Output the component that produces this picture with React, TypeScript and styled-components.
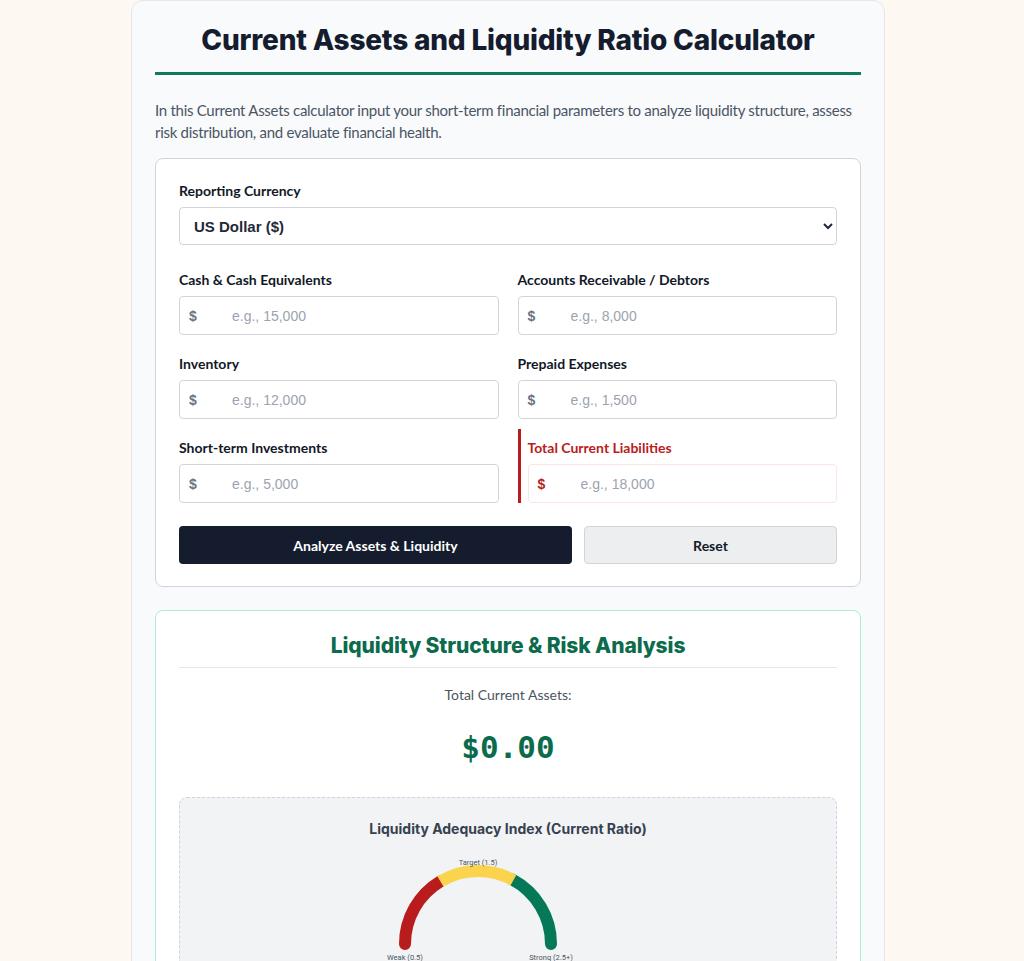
import styled, { createGlobalStyle } from 'styled-components';

const GlobalStyle = createGlobalStyle`
  * { box-sizing: border-box; }
  body {
    margin: 0;
    background: #fdf8f2;
    font-family: Lato, "Open Sans", sans-serif;
  }
`;

const fields = [
  { label: 'Cash & Cash Equivalents', placeholder: 'e.g., 15,000' },
  { label: 'Accounts Receivable / Debtors', placeholder: 'e.g., 8,000' },
  { label: 'Inventory', placeholder: 'e.g., 12,000' },
  { label: 'Prepaid Expenses', placeholder: 'e.g., 1,500' },
  { label: 'Short-term Investments', placeholder: 'e.g., 5,000' },
];

// semicircle arc on the gauge, angles in degrees (180 = left end)
const arc = (from: number, to: number) => {
  const cx = 100, cy = 88, r = 73;
  const p = (a: number) => {
    const rad = (a * Math.PI) / 180;
    return `${(cx + r * Math.cos(rad)).toFixed(2)} ${(cy - r * Math.sin(rad)).toFixed(2)}`;
  };
  return `M ${p(from)} A ${r} ${r} 0 0 1 ${p(to)}`;
};

const App = () => {
  return (
    <>
      <GlobalStyle />
      <Page>
        <Container>
          <Title>Current Assets and Liquidity Ratio Calculator</Title>
          <Intro>
            In this Current Assets calculator input your short-term financial parameters to analyze
            liquidity structure, assess risk distribution, and evaluate financial health.
          </Intro>

          <FormCard>
            <Field>
              <Label>Reporting Currency</Label>
              <Select defaultValue="USD">
                <option value="USD">US Dollar ($)</option>
                <option value="EUR">Euro (€)</option>
                <option value="GBP">British Pound (£)</option>
              </Select>
            </Field>

            <Grid>
              {fields.map((f) => (
                <Field key={f.label}>
                  <Label>{f.label}</Label>
                  <InputWrap>
                    <Prefix>$</Prefix>
                    <Input placeholder={f.placeholder} />
                  </InputWrap>
                </Field>
              ))}
              <LiabilityField>
                <Label $danger>Total Current Liabilities</Label>
                <InputWrap $danger>
                  <Prefix $danger>$</Prefix>
                  <Input placeholder="e.g., 18,000" />
                </InputWrap>
              </LiabilityField>
            </Grid>

            <Actions>
              <PrimaryButton>Analyze Assets &amp; Liquidity</PrimaryButton>
              <ResetButton>Reset</ResetButton>
            </Actions>
          </FormCard>

          <ResultCard>
            <ResultTitle>Liquidity Structure &amp; Risk Analysis</ResultTitle>
            <TotalLabel>Total Current Assets:</TotalLabel>
            <TotalValue>$0.00</TotalValue>

            <GaugeBox>
              <GaugeTitle>Liquidity Adequacy Index (Current Ratio)</GaugeTitle>
              <GaugeSvg width="200" height="110" viewBox="0 0 200 110">
                <path d={arc(180, 121)} stroke="#b91c1c" strokeWidth="12" fill="none" strokeLinecap="round" />
                <path d={arc(62, 0)} stroke="#047857" strokeWidth="12" fill="none" strokeLinecap="round" />
                <path d={arc(121, 61)} stroke="#fcd34d" strokeWidth="12" fill="none" />
                <text x="100" y="9" textAnchor="middle" fontSize="7.5" fill="#4b5563" fontFamily="Roboto, sans-serif">Target (1.5)</text>
                <text x="27" y="104" textAnchor="middle" fontSize="7.5" fill="#4b5563" fontFamily="Roboto, sans-serif">Weak (0.5)</text>
                <text x="173" y="104" textAnchor="middle" fontSize="7.5" fill="#4b5563" fontFamily="Roboto, sans-serif">Strong (2.5+)</text>
              </GaugeSvg>
            </GaugeBox>
          </ResultCard>
        </Container>
      </Page>
    </>
  );
};

export default App;

const Page = styled.div`
  display: flex;
  justify-content: center;
  padding-right: 8px;
`;

const Container = styled.div`
  width: 754px;
  background: #f8fafc;
  border: 1px solid #e5e7eb;
  border-radius: 12px;
  padding: 22px 23px 40px;
`;

const Title = styled.h1`
  margin: 0;
  padding-bottom: 15px;
  border-bottom: 3px solid #0f7a57;
  text-align: center;
  font-family: Inter, sans-serif;
  font-size: 28px;
  font-weight: 800;
  letter-spacing: -0.2px;
  color: #141c2e;
`;

const Intro = styled.p`
  margin: 24px 0 15px;
  font-size: 15px;
  line-height: 22px;
  letter-spacing: -0.28px;
  color: #4b5563;
`;

const FormCard = styled.div`
  background: #fff;
  border: 1px solid #d1d5db;
  border-radius: 8px;
  padding: 23px 23px 22px;
`;

const Field = styled.div`
  display: flex;
  flex-direction: column;
`;

const LiabilityField = styled(Field)`
  border-left: 3px solid #b91c1c;
  padding-left: 7px;
  margin-top: -10px;
  padding-top: 10px;
`;

const Label = styled.label<{ $danger?: boolean }>`
  font-size: 14px;
  font-weight: 700;
  line-height: 18px;
  margin-bottom: 7px;
  color: ${(p) => (p.$danger ? '#b91c1c' : '#111827')};
`;

const Select = styled.select`
  height: 38px;
  padding: 0 8px 0 10px;
  border: 1px solid #d1d5db;
  border-radius: 4px;
  background: #fff;
  font-family: "Liberation Sans", Arial, sans-serif;
  font-size: 15px;
  font-weight: 700;
  color: #1f2937;
`;

const Grid = styled.div`
  display: grid;
  grid-template-columns: 1fr 1fr;
  column-gap: 19px;
  row-gap: 20px;
  margin-top: 26px;
`;

const InputWrap = styled.div<{ $danger?: boolean }>`
  display: flex;
  align-items: center;
  height: 39px;
  background: #fff;
  border: 1px solid ${(p) => (p.$danger ? '#fbe4e4' : '#d1d5db')};
  border-radius: 4px;
  padding-left: 9px;
`;

const Prefix = styled.span<{ $danger?: boolean }>`
  width: 41px;
  font-family: "Liberation Sans", Arial, sans-serif;
  font-size: 14px;
  font-weight: 700;
  color: ${(p) => (p.$danger ? '#b91c1c' : '#6b7280')};
`;

const Input = styled.input`
  flex: 1;
  border: none;
  outline: none;
  background: transparent;
  font-family: "Liberation Sans", Arial, sans-serif;
  font-size: 14px;
  color: #1f2937;
  &::placeholder { color: #9ca3af; }
`;

const Actions = styled.div`
  display: flex;
  gap: 12px;
  margin-top: 23px;
`;

const PrimaryButton = styled.button`
  width: 393px;
  height: 38px;
  border: none;
  border-radius: 4px;
  background: #141c2e;
  color: #fff;
  font-family: Lato, sans-serif;
  font-size: 14px;
  font-weight: 700;
`;

const ResetButton = styled.button`
  flex: 1;
  height: 38px;
  border: 1px solid #d1d5db;
  border-radius: 4px;
  background: #eceef0;
  color: #111827;
  font-family: Lato, sans-serif;
  font-size: 14px;
  font-weight: 700;
`;

const ResultCard = styled.div`
  margin-top: 23px;
  background: #fff;
  border: 1px solid #a7eed8;
  border-radius: 8px;
  padding: 22px 23px 30px;
  text-align: center;
`;

const ResultTitle = styled.h2`
  margin: 0;
  padding-bottom: 9px;
  border-bottom: 1px solid #e5e7eb;
  font-family: Inter, sans-serif;
  font-size: 21px;
  font-weight: 800;
  letter-spacing: -0.1px;
  color: #0b6b4c;
`;

const TotalLabel = styled.div`
  margin-top: 18px;
  font-size: 14px;
  color: #4b5563;
`;

const TotalValue = styled.div`
  margin-top: 26px;
  font-family: "DejaVu Sans Mono", monospace;
  font-size: 31px;
  font-weight: 700;
  color: #0b6b4c;
`;

const GaugeBox = styled.div`
  margin-top: 32px;
  background: #f1f3f5;
  border: 1px dashed #cbd5e1;
  border-radius: 8px;
  padding: 22px 20px 20px;
`;

const GaugeTitle = styled.div`
  font-family: Inter, sans-serif;
  font-size: 14px;
  font-weight: 700;
  color: #374151;
`;

const GaugeSvg = styled.svg`
  display: block;
  margin: 19px 0 0 178px;
`;
